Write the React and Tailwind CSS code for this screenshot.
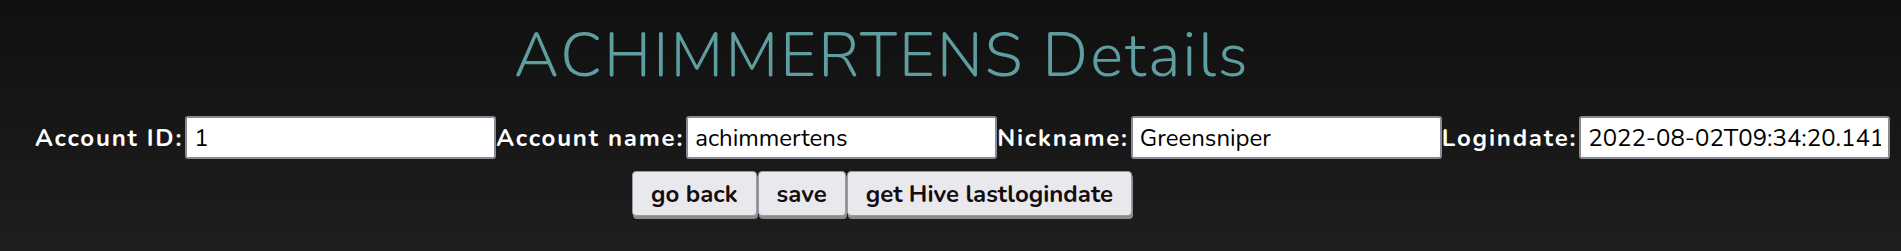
const fields = [
  { label: "Account ID:", value: "1" },
  { label: "Account name:", value: "achimmertens" },
  { label: "Nickname:", value: "Greensniper" },
  { label: "Logindate:", value: "2022-08-02T09:34:20.141" },
];

export default function App() {
  return (
    <div className="h-[251px] w-full overflow-hidden bg-gradient-to-b from-[#101010] to-[#1e1e1e] font-['Nunito','Lato',sans-serif]">
      <div className="w-[1764px] text-center">
        <h1 className="pt-[22px] h-[96px] text-[62px] leading-[68px] font-light tracking-[2.2px] text-[#5f9ea0]">
          ACHIMMERTENS Details
        </h1>
        <div className="ml-[35px] flex items-center whitespace-nowrap h-[43px] mt-[20px]">
          {fields.map((f) => (
            <div key={f.label} className="flex items-center">
              <label className="pr-[2px] text-[24px] font-bold tracking-[1.8px] text-white">{f.label}</label>
              <input
                readOnly
                value={f.value}
                className="w-[311px] h-[43px] rounded-[3px] border-2 border-[#8a8a96] bg-white px-[7px] text-[24px] text-black outline-none"
              />
            </div>
          ))}
        </div>
        <div className="mt-[12px] flex justify-center gap-px">
          {["go back", "save", "get Hive lastlogindate"].map((b) => (
            <button
              key={b}
              className="h-[45px] rounded-[4px] border border-[#9a9aa4] bg-[#e9e9ed] px-[18px] text-[24px] font-bold text-[#150d0d] shadow-[1px_3px_0_#8c8c8c]"
            >
              {b}
            </button>
          ))}
        </div>
      </div>
    </div>
  );
}
